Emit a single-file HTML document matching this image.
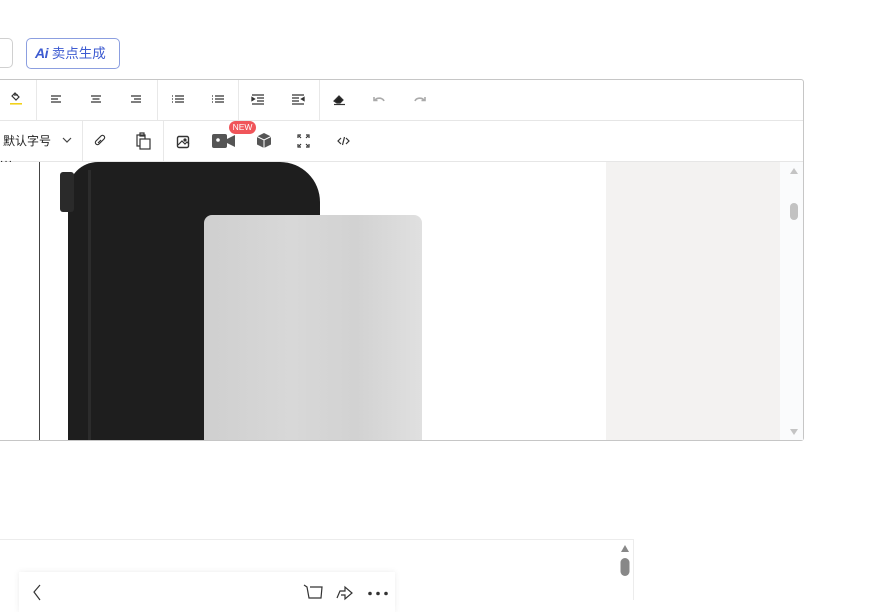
<!DOCTYPE html>
<html><head><meta charset="utf-8"><style>
*{box-sizing:border-box;margin:0;padding:0}
body{width:889px;height:600px;overflow:hidden;background:#fff;position:relative;font-family:"Liberation Sans","Noto Sans CJK SC",sans-serif}
.abs{position:absolute}
.sep{position:absolute;width:1px;background:#e8e8e8}
svg{position:absolute;overflow:visible}
</style></head><body>
<!-- top buttons -->
<div class="abs" style="left:-20px;top:38px;width:33px;height:30px;border:1px solid #d0d0d0;border-radius:5px"></div>
<div class="abs" style="left:26px;top:38px;width:94px;height:31px;border:1px solid #8c9fe0;border-radius:5px;color:#3d5bd1;font-size:13.5px;line-height:29px;padding-left:8px"><b style="font-style:italic;font-size:14px;letter-spacing:-0.5px">Ai</b> 卖点生成</div>

<!-- editor -->
<div class="abs" style="left:-5px;top:79px;width:809px;height:362px;border:1px solid #c6c6c6;border-radius:3px"></div>
<div class="abs" style="left:0;top:120px;width:803px;height:1px;background:#e6e6e6"></div>
<div class="abs" style="left:0;top:161px;width:803px;height:1px;background:#e6e6e6"></div>
<div class="sep" style="left:36px;top:80px;height:40px"></div>
<div class="sep" style="left:157px;top:80px;height:40px"></div>
<div class="sep" style="left:238px;top:80px;height:40px"></div>
<div class="sep" style="left:319px;top:80px;height:40px"></div>
<div class="sep" style="left:82px;top:121px;height:40px"></div>
<div class="sep" style="left:163px;top:121px;height:40px"></div>

<!-- row1 icons -->
<svg style="left:0;top:0" width="889" height="600" fill="none" stroke="#333" stroke-width="1.2">
<path d="M12 96l3-3 4 4-3 3zM14 95l4 0" />
<rect x="10" y="103" width="12" height="1.6" fill="#f2d11a" stroke="none"/>
<g stroke-width="1.3">
<path d="M51 96h10M51 99h7M51 102h10"/>
<path d="M91 96h10M92.5 99h7M91 102h10"/>
<path d="M131 96h10M134 99h7M131 102h10"/>
<path d="M172 96h1M175 96h9M172 99h1M175 99h9M172 102h1M175 102h9"/>
<path d="M212 96h1M215 96h9M212 99h1M215 99h9M212 102h1M215 102h9"/>
<path d="M252 95h12M257 98h7M257 101h7M252 104h12"/><path d="M252 97.5l2.5 1.5-2.5 1.5z" fill="#333"/>
<path d="M292 95h12M292 98h7M292 101h7M292 104h12"/><path d="M304 97.5l-2.5 1.5 2.5 1.5z" fill="#333"/>
</g>
<path d="M334 101l5-5 4 4-3 3h-3z" fill="#222"/><path d="M334 104.5h11"/>
<path d="M375 100a5 4 0 0 1 9 1M374 97v3.5h3.5" stroke="#aaa" stroke-width="1.6"/>
<path d="M424 100a5 4 0 0 0-9 1M425 97v3.5h-3.5" stroke="#aaa" stroke-width="1.6"/>
<!-- row2 -->
<path d="M63 138l4 4 4-4" stroke="#444"/>
<path d="M99 144l5-5a2 2 0 0 0-3-3l-5 5a2 2 0 0 0 3 3M101 140l-3 3" />
<rect x="137" y="135" width="8" height="11" /><rect x="140" y="139" width="10" height="10" fill="#fff"/><path d="M140 133h4v3h-4z"/>
<rect x="177.5" y="136.5" width="11" height="11" rx="1.5" stroke-width="1.4"/><path d="M178 145l4-4 3 3 2-2 2 2" /><circle cx="185" cy="140" r="1" fill="#333"/>
<rect x="212" y="134" width="15" height="14" rx="2" fill="#555" stroke="none"/><path d="M227 139l8-4v12l-8-4z" fill="#555" stroke="none"/><circle cx="218" cy="140" r="1.8" fill="#fff" stroke="none"/>
<path d="M264 133l7 3.5v8l-7 3.5-7-3.5v-8z" fill="#555" stroke="none"/><path d="M257 136.5l7 3.5 7-3.5M264 140v8" stroke="#fff" stroke-width="1"/>
<path d="M298 138v-3h3M309 138v-3h-3M298 144v3h3M309 144v3h-3M299 136l2 2M308 136l-2 2M299 146l2-2M308 146l-2-2"/>
<path d="M341 138l-3 3 3 3M346 138l3 3-3 3M344.5 137l-2 8"/>
</svg>
<div class="abs" style="left:3px;top:131px;font-size:12px;color:#222;line-height:20px">默认字号</div>
<div class="abs" style="left:229px;top:121px;width:27px;height:13px;border-radius:7px;background:#f0555a;color:#fff;font-size:8.5px;line-height:13px;text-align:center">NEW</div>

<!-- content -->
<div class="abs" style="left:0;top:158px;font-size:10px;color:#000;letter-spacing:1px;line-height:8px">···</div>
<div class="abs" style="left:39px;top:162px;width:1px;height:278px;background:#444"></div>
<div class="abs" style="left:68px;top:162px;width:252px;height:278px;background:#1e1e1e;border-radius:30px 40px 0 0"></div>
<div class="abs" style="left:60px;top:172px;width:14px;height:40px;background:#2a2a2a;border-radius:3px"></div>
<div class="abs" style="left:88px;top:170px;width:3px;height:270px;background:#2c2c2c"></div>
<div class="abs" style="left:204px;top:215px;width:218px;height:225px;border-radius:8px 8px 0 0;background:linear-gradient(90deg,#cfcfcf,#d8d8d8 40%,#d2d2d2 70%,#e0e0e0)"></div>
<div class="abs" style="left:606px;top:162px;width:174px;height:278px;background:#f3f2f1"></div>
<div class="abs" style="left:780px;top:162px;width:23px;height:278px;background:#fafbfc"></div>
<svg style="left:0;top:0" width="889" height="600">
<path d="M790 174l4-6 4 6z" fill="#c4c4c4"/><path d="M790 429l4 6 4-6z" fill="#c4c4c4"/>
<rect x="790" y="203" width="8" height="17" rx="4" fill="#c2c2c2"/>
</svg>

<!-- bottom preview -->
<div class="abs" style="left:0;top:539px;width:634px;height:61px;border-top:1px solid #ececec;border-right:1px solid #ececec"></div>
<div class="abs" style="left:19px;top:572px;width:376px;height:40px;background:#fff;box-shadow:0 0 6px rgba(0,0,0,.08)"></div>
<svg style="left:0;top:0" width="889" height="600" fill="none" stroke="#333" stroke-width="1.2">
<path d="M621 552l4-7 4 7z" fill="#888" stroke="none"/>
<rect x="620.5" y="558" width="9" height="18" rx="4.5" fill="#888" stroke="none"/>
<path d="M40 585l-6 7 6 8"/>
<path d="M304 585l3 2 2 11h12l1-11h-12"/>
<path d="M337 598l3-7h5v-4l7 6-7 6v-4h-4" />
<circle cx="370" cy="593.5" r="1.8" fill="#333" stroke="none"/><circle cx="378" cy="593.5" r="1.8" fill="#333" stroke="none"/><circle cx="386" cy="593.5" r="1.8" fill="#333" stroke="none"/>
</svg>
</body></html>
